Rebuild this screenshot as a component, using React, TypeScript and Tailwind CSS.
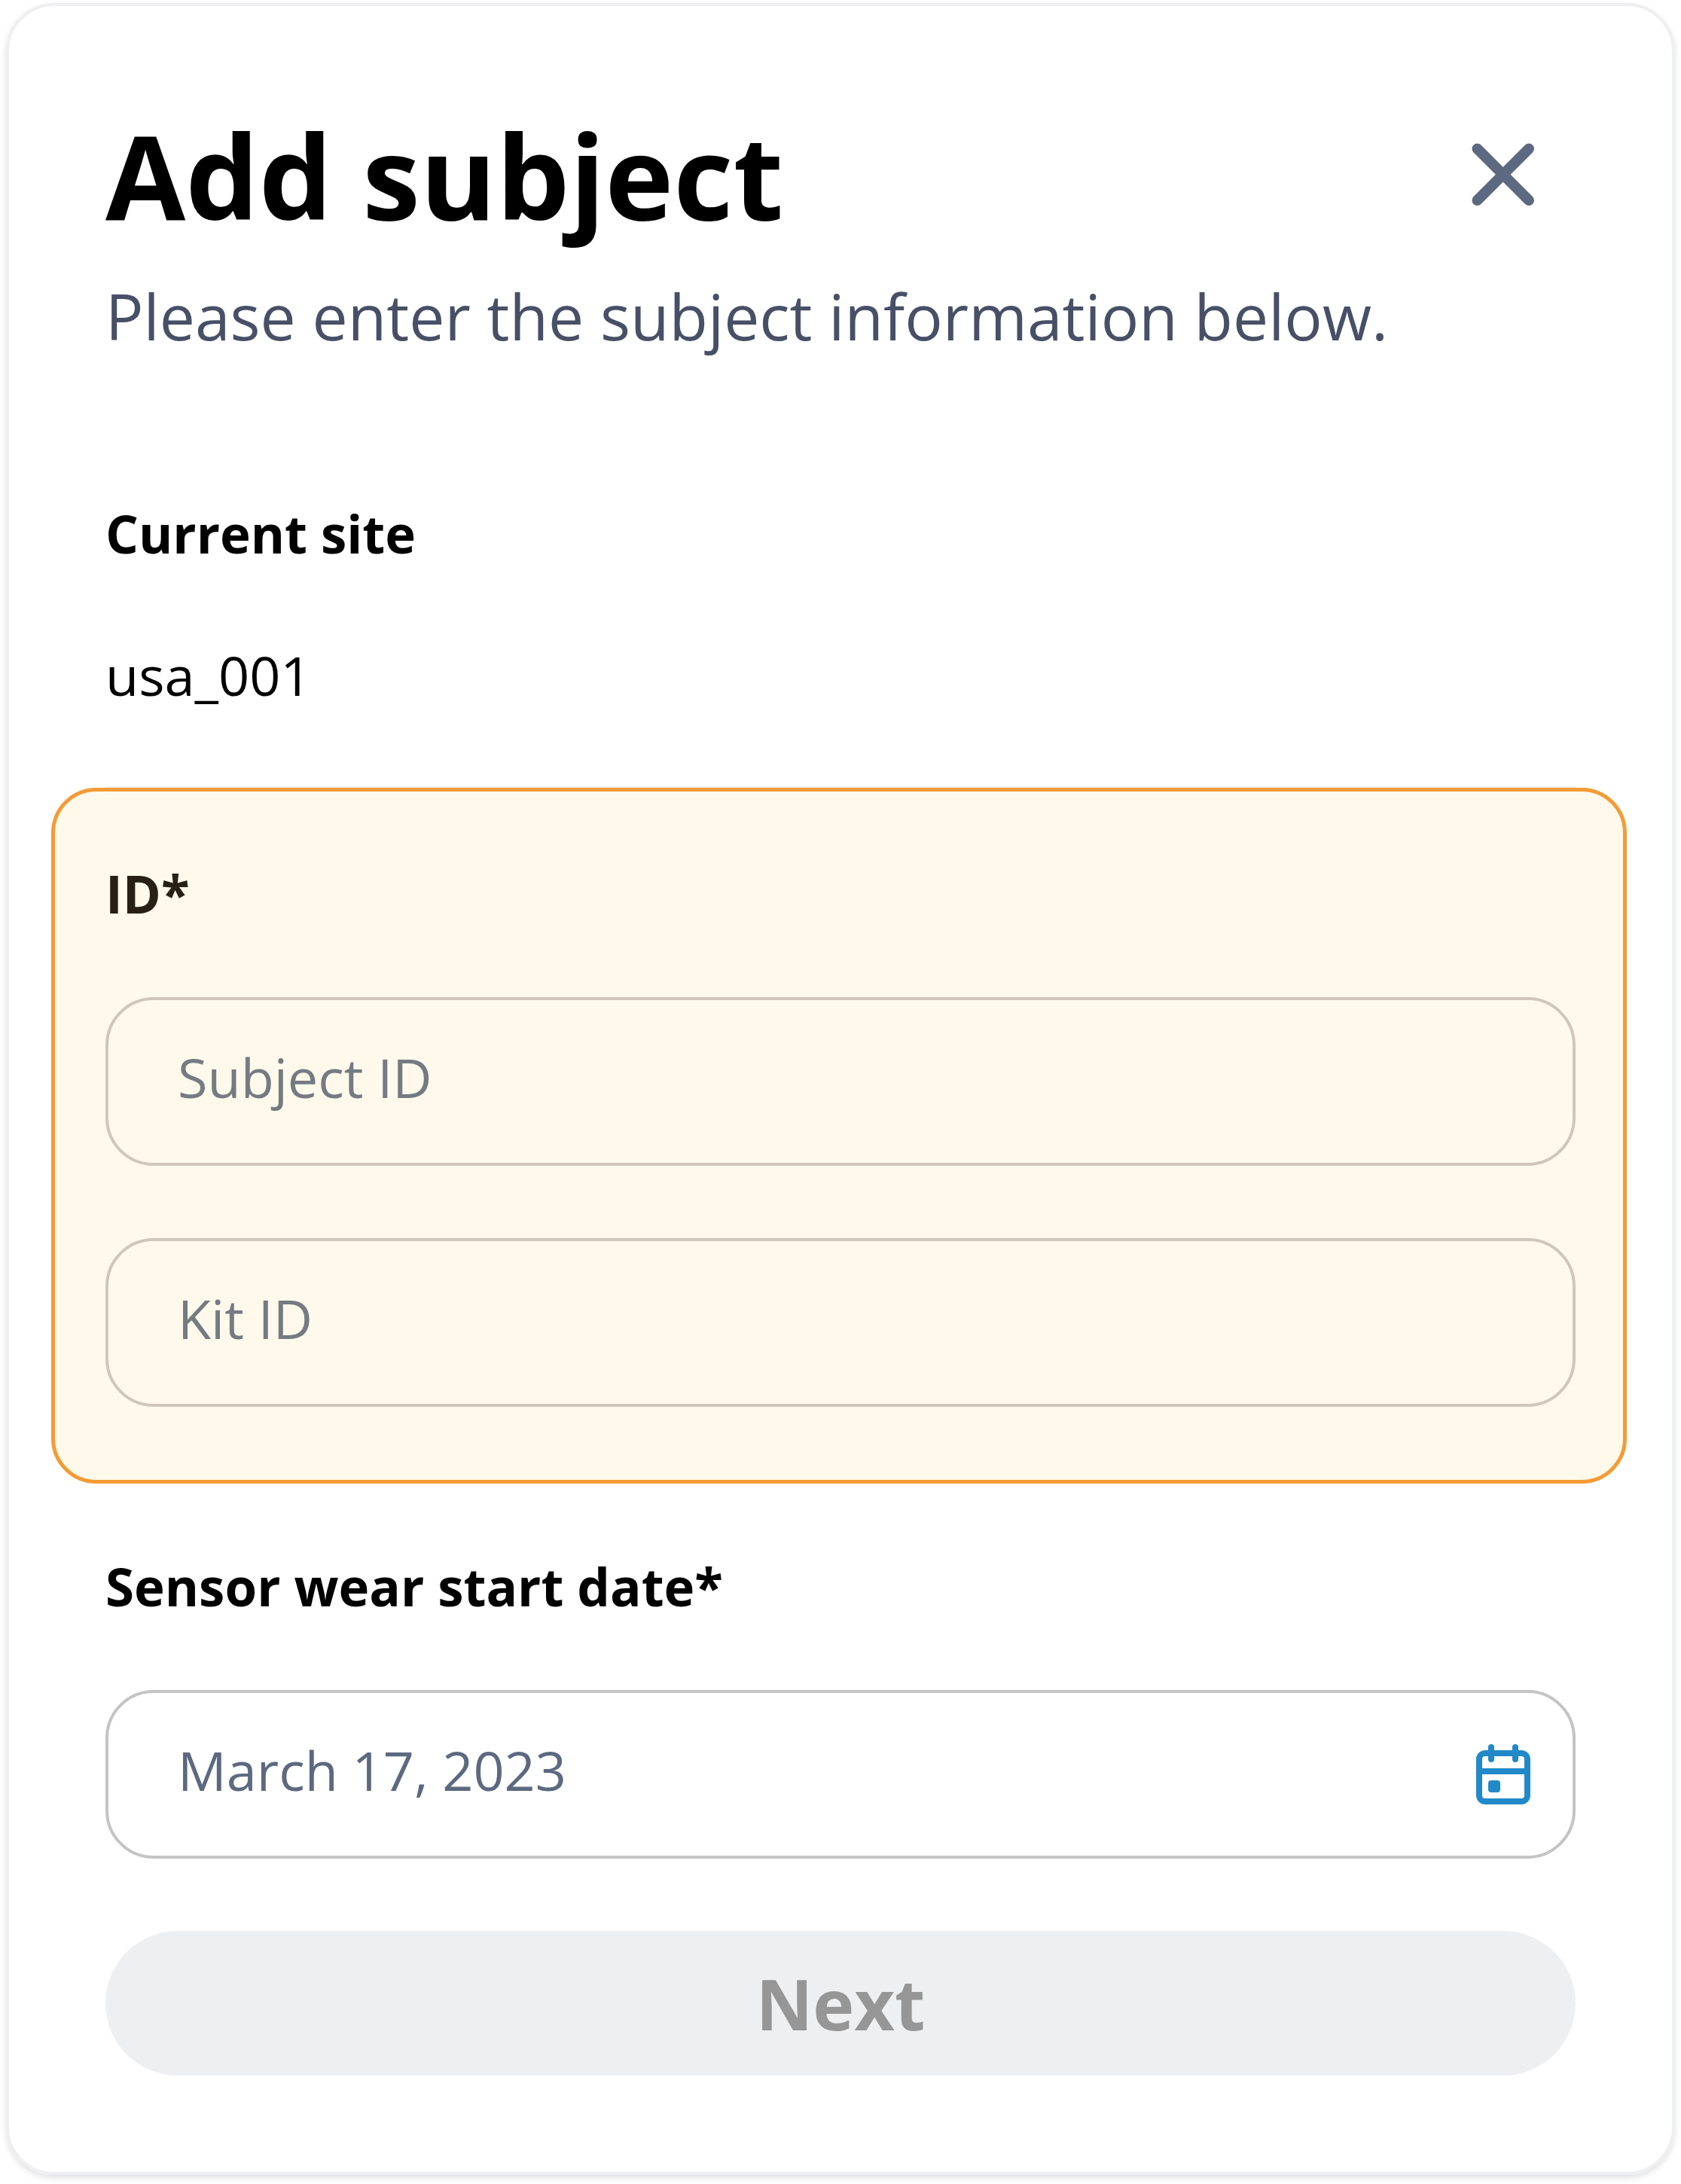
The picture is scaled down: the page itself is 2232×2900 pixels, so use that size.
import { useState } from "react";

const CloseIcon = () => (
  <svg viewBox="0 0 96 96" className="size-24" fill="none" stroke="currentColor" strokeWidth="14" strokeLinecap="round">
    <path d="M13.5 13.5 82 82M82 13.5 13.5 82" />
  </svg>
);

const CalendarIcon = () => (
  <svg viewBox="0 0 24 24" className="size-24" fill="none" stroke="currentColor" strokeWidth="2" strokeLinecap="round">
    <rect x="4" y="5" width="16" height="16" rx="2" />
    <path d="M4 11h16M8 3v4M16 3v4" />
    <rect x="7" y="14" width="4" height="4" rx="1" fill="currentColor" stroke="none" />
  </svg>
);

const App = () => {
  const [subjectId, setSubjectId] = useState("");
  const [kitId, setKitId] = useState("");
  const [date, setDate] = useState("March 17, 2023");

  return (
    <div className="px-2 pt-1 pb-3 bg-white font-['Open_Sans',sans-serif] text-[72px] leading-[96px] text-black">
      <form className="rounded-[64px] border-4 border-[#eeeff1] px-14 pt-32 pb-32 shadow-[0_4px_8px_rgba(0,0,0,0.12)]">
        <div className="px-18">
          <div className="flex items-center justify-between pr-12">
            <h1 className="text-[154px] leading-[192px] font-bold">Add subject</h1>
            <button type="button" aria-label="Close" className="text-[#5c6980]">
              <CloseIcon />
            </button>
          </div>
          <p className="mt-8 text-[84px] leading-[120px] text-[#475067]">
            Please enter the subject information below.
          </p>
          <h2 className="mt-45 text-[69px] font-bold">Current site</h2>
          <p className="mt-23 border-b-2 border-[#eeeff1] pb-25">usa_001</p>
        </div>

        <fieldset className="mr-1 rounded-[60px] border-[5px] border-[#f59b35] bg-[#fff9eb] pt-[87px] pr-[63px] pb-[97px] pl-[67px]">
          <h2 className="text-[69px] font-bold text-[#282014]">ID*</h2>
          <div className="mt-[90px] flex flex-col gap-24">
            <input
              aria-label="Subject ID"
              placeholder="Subject ID"
              value={subjectId}
              onChange={(e) => setSubjectId(e.target.value)}
              className="h-56 w-full rounded-[64px] border-4 border-[#cfc7ba] px-[92px] pb-3 placeholder:text-[#747b82]"
            />
            <input
              aria-label="Kit ID"
              placeholder="Kit ID"
              value={kitId}
              onChange={(e) => setKitId(e.target.value)}
              className="h-56 w-full rounded-[64px] border-4 border-[#cfc7ba] px-[92px] pb-3 placeholder:text-[#747b82]"
            />
          </div>
        </fieldset>

        <div className="px-18">
          <label htmlFor="start-date" className="mt-22 block text-[69px] font-bold">
            Sensor wear start date*
          </label>
          <div className="mt-[90px] flex h-56 items-center rounded-[64px] border-4 border-[#c4c4c4] pr-11 pl-[92px] text-[#5c6980]">
            <input
              id="start-date"
              value={date}
              onChange={(e) => setDate(e.target.value)}
              className="min-w-0 flex-1 pb-3"
            />
            <button type="button" aria-label="Pick a date" className="text-[#2189c8]">
              <CalendarIcon />
            </button>
          </div>
          <button
            type="submit"
            disabled
            className="mt-24 h-48 w-full rounded-full bg-[#eeeff1] text-[93px] font-bold text-[#969696]"
          >
            Next
          </button>
        </div>
      </form>
    </div>
  );
};

export default App;
